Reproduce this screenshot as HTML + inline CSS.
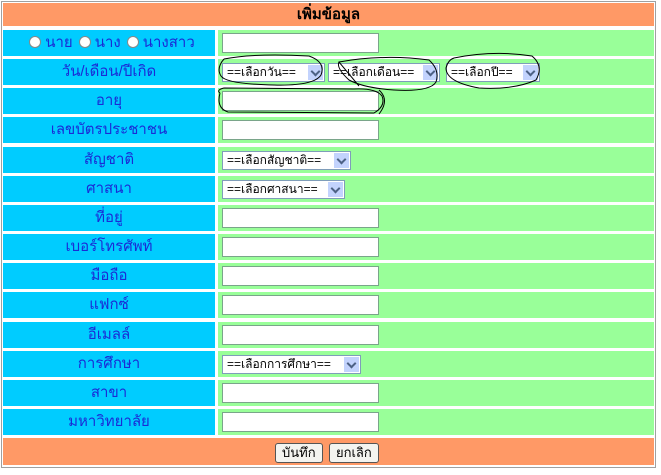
<!DOCTYPE html>
<html><head><meta charset="utf-8"><style>
body{margin:0;width:661px;height:475px;background:#fff;position:relative;overflow:hidden;font-family:"Liberation Sans","DejaVu Sans",sans-serif;}
.frame{position:absolute;left:1px;top:1px;width:655px;height:467px;border:1px solid #a0a0a0;box-sizing:border-box}
.h{position:absolute;left:3px;width:651px;background:#ff9966;}
.l{position:absolute;left:3px;width:212px;height:26px;background:#00ccff;color:#1a2bd6;font-size:15px;text-align:center;line-height:26px}
.r{position:absolute;left:218px;width:436px;height:26px;background:#99ff99}
.in{position:absolute;left:4px;top:3px;width:157px;height:20px;background:#fff;border:1px solid #7aa58a;box-sizing:border-box}
.sel{position:absolute;top:4px;height:19px;background:#fff;border:1px solid #7f9db9;box-sizing:border-box;font-size:12px;line-height:17px;padding-left:4px;color:#000}
.sel:after{content:"";position:absolute;right:1px;top:1px;width:15px;height:15px;background:#c3d3fd}
.sel i{position:absolute;right:5px;top:4px;width:5px;height:5px;border-right:2px solid #4d6185;border-bottom:2px solid #4d6185;transform:rotate(45deg);z-index:2}
.btn{position:absolute;top:443px;height:20px;border:1px solid #555;border-radius:3px;background:#f4f4f0;font-size:13px;line-height:18px;padding:0 6px;box-sizing:border-box}
.radio{display:inline-block;width:10px;height:10px;border-radius:50%;background:#fff;border:1px solid #888;vertical-align:middle;margin:0 4px 2px 6px}
</style></head><body>
<div class="frame"></div>
<div class="h" style="top:3px;height:23px;text-align:center;font-weight:bold;font-size:15px;line-height:23px">เพิ่มข้อมูล</div>

<div class="l" style="top:30px"><span class="radio"></span>นาย<span class="radio"></span>นาง<span class="radio"></span>นางสาว</div>
<div class="r" style="top:30px"><div class="in"></div></div>

<div class="l" style="top:59px">วัน/เดือน/ปีเกิด</div>
<div class="r" style="top:59px">
<div class="sel" style="left:4px;width:103px">==เลือกวัน==<i></i></div>
<div class="sel" style="left:110px;width:112px">==เลือกเดือน==<i></i></div>
<div class="sel" style="left:228px;width:94px">==เลือกปี==<i></i></div>
</div>

<div class="l" style="top:88px">อายุ</div>
<div class="r" style="top:88px"><div class="in"></div></div>

<div class="l" style="top:117px">เลขบัตรประชาชน</div>
<div class="r" style="top:117px"><div class="in"></div></div>

<div class="l" style="top:147px">สัญชาติ</div>
<div class="r" style="top:147px"><div class="sel" style="left:4px;width:129px">==เลือกสัญชาติ==<i></i></div></div>

<div class="l" style="top:176px">ศาสนา</div>
<div class="r" style="top:176px"><div class="sel" style="left:4px;width:123px">==เลือกศาสนา==<i></i></div></div>

<div class="l" style="top:205px">ที่อยู่</div>
<div class="r" style="top:205px"><div class="in"></div></div>

<div class="l" style="top:234px">เบอร์โทรศัพท์</div>
<div class="r" style="top:234px"><div class="in"></div></div>

<div class="l" style="top:263px">มือถือ</div>
<div class="r" style="top:263px"><div class="in"></div></div>

<div class="l" style="top:292px">แฟกซ์</div>
<div class="r" style="top:292px"><div class="in"></div></div>

<div class="l" style="top:322px">อีเมลล์</div>
<div class="r" style="top:322px"><div class="in"></div></div>

<div class="l" style="top:351px">การศึกษา</div>
<div class="r" style="top:351px"><div class="sel" style="left:4px;width:139px">==เลือกการศึกษา==<i></i></div></div>

<div class="l" style="top:380px">สาขา</div>
<div class="r" style="top:380px"><div class="in"></div></div>

<div class="l" style="top:409px">มหาวิทยาลัย</div>
<div class="r" style="top:409px"><div class="in"></div></div>

<div class="h" style="top:438px;height:27px"></div>
<div class="btn" style="left:275px">บันทึก</div>
<div class="btn" style="left:329px">ยกเลิก</div>

<svg style="position:absolute;left:214px;top:50px;z-index:5" width="340" height="70"><g fill="none" stroke="#000" stroke-width="1">
<path d="M10 9 Q40 3 95 6 Q112 12 107 25 Q100 36 60 35 Q12 34 7 26 Q2 18 10 9"/>
<path d="M125 12 Q170 4 215 10 Q226 20 222 32 Q216 42 180 40 Q150 38 135 30 Q122 18 125 12 L145 36"/>
<path d="M240 8 Q280 0 318 6 Q330 16 322 30 Q300 40 265 38 Q232 32 232 18 Q234 10 240 8"/>
<path d="M6 43 Q2 58 14 62 L160 63 Q172 56 168 46 Q162 38 140 39 L10 38 Q2 40 6 43 M165 40 Q176 50 165 64"/></g></svg>
</body></html>
